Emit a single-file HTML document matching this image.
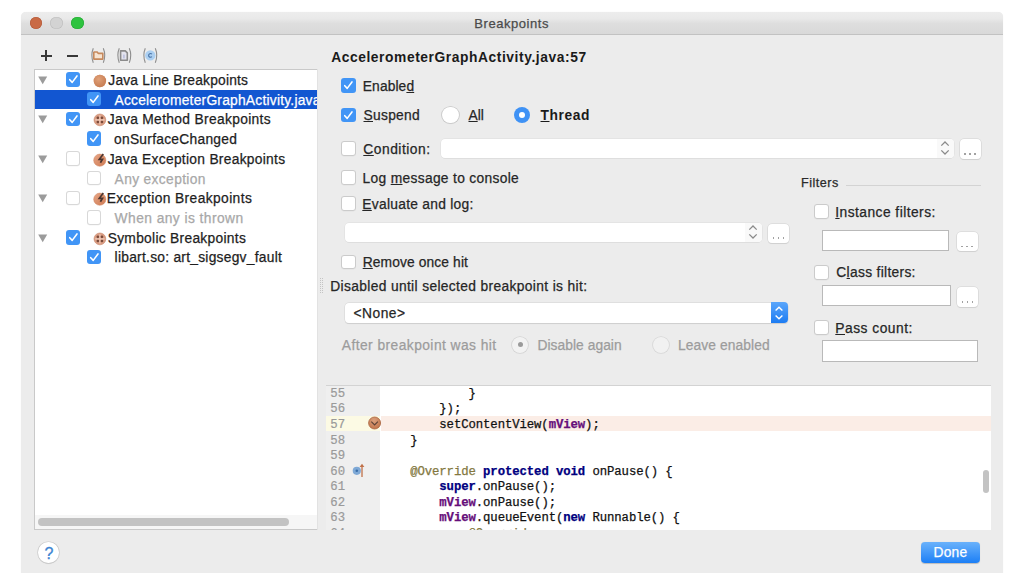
<!DOCTYPE html>
<html><head><meta charset="utf-8">
<style>
*{margin:0;padding:0;box-sizing:border-box}
html,body{width:1024px;height:573px;overflow:hidden;background:#fff;font-family:"Liberation Sans",sans-serif;color:#262626}
.a{position:absolute}
.t{position:absolute;white-space:nowrap}
.s{-webkit-text-stroke:0.25px currentColor}
u{text-decoration:underline;text-underline-offset:1px;text-decoration-thickness:1px}
#clipT{position:absolute;left:35px;top:70px;width:282px;height:445px;overflow:hidden}
#clipE{position:absolute;left:325.6px;top:386.6px;width:665.7px;height:143.1px;overflow:hidden}
</style></head><body>
<div class="a" style="left:21.3px;top:12px;width:982.00px;height:568.00px;background:#ececec;border-radius:5px 5px 6px 6px;box-shadow:0 0 1px rgba(0,0,0,0.08)"></div>
<div class="a" style="left:21.3px;top:12px;width:982.00px;height:23.00px;background:linear-gradient(#ededed 0%,#e9e9e9 30%,#dedede 52%,#d9d9d9 100%);border-bottom:1px solid #c2c2c2;border-radius:5px 5px 0 0"></div>
<div class="a" style="left:29.65px;top:16.95px;width:12.5px;height:12.5px;border-radius:50%;background:#c96a45;box-shadow:inset 0 0 0 0.6px #b35a3a"></div>
<div class="a" style="left:50.25px;top:16.95px;width:12.5px;height:12.5px;border-radius:50%;background:#d3d3d3;box-shadow:inset 0 0 0 0.6px #bdbdbd"></div>
<div class="a" style="left:71.25px;top:16.95px;width:12.5px;height:12.5px;border-radius:50%;background:#2ec33f;box-shadow:inset 0 0 0 0.6px #27a936"></div>
<div class="a" style="left:41px;top:54.6px;width:10.60px;height:2.00px;background:#383838"></div>
<div class="a" style="left:45.3px;top:50.3px;width:2.00px;height:10.50px;background:#383838"></div>
<div class="a" style="left:66.9px;top:54.6px;width:10.80px;height:2.00px;background:#383838"></div>
<svg class="a" style="left:88px;top:46px" width="74" height="20" viewBox="0 0 74 20">
 <g fill="none" stroke="#8e8e8e" stroke-width="1.1">
  <path d="M5.3 2.3 Q2.4 9.3 5.3 16.8"/><path d="M15.3 2.3 Q18.2 9.3 15.3 16.8"/>
  <path d="M31.3 2.3 Q28.4 9.3 31.3 16.8"/><path d="M41.3 2.3 Q44.2 9.3 41.3 16.8"/>
  <path d="M57.3 2.3 Q54.4 9.3 57.3 16.8"/><path d="M67.3 2.3 Q70.2 9.3 67.3 16.8"/>
 </g>
 <path d="M5.8 6.4 V13.1 H14.8 V7.4 H10.2 L9.2 6.0 H6.2 Z" fill="#f6e4d2" stroke="#c6895d" stroke-width="1.6" stroke-linejoin="round"/>
 <path d="M32.6 4.9 H37.3 L39.3 6.9 V14.2 H32.6 Z" fill="#e4e4ee" stroke="#8b8b8b" stroke-width="1.6" stroke-linejoin="round"/>
 <rect x="35.5" y="8.6" width="0.9" height="3.8" fill="#9ba3d2"/>
 <circle cx="62.3" cy="9.4" r="5.2" fill="#abcff1"/>
 <path d="M63.9 8.1 A1.9 1.9 0 1 0 63.9 10.7" fill="none" stroke="#4a75a8" stroke-width="1.1"/>
</svg>
<div class="a" style="left:34px;top:69px;width:284.00px;height:461.00px;background:#fff;border:1px solid #c9c9c9"></div>
<div class="a" style="left:35px;top:90.2px;width:282.00px;height:19.00px;background:#1256d1"></div>
<div class="a" style="left:35px;top:515px;width:282.00px;height:14.00px;background:#f6f6f6"></div>
<div class="a" style="left:38px;top:518px;width:251.00px;height:8.00px;background:#c3c3c3;border-radius:4px"></div>
<svg class="a" style="left:38px;top:75.50px" width="10" height="9" viewBox="0 0 10 9"><path d="M0.2 0.6 H9.2 L4.7 8.2 Z" fill="#9b9b9b"/></svg>
<div class="a" style="left:65.9px;top:72.2px;width:14.5px;height:14.5px;border-radius:3px;background:#4195f6"></div>
<svg class="a" style="left:65.9px;top:72.2px" width="14.5" height="14.5" viewBox="0 0 14 14"><path d="M3.6 7.4 L6 10 L10.6 3.8" fill="none" stroke="#fff" stroke-width="1.5" stroke-linecap="round" stroke-linejoin="round"/></svg>
<svg class="a" style="left:92.5px;top:73.50px" width="14" height="14" viewBox="0 0 14 14"><circle cx="6.9" cy="7" r="6.2" fill="#d08a5e"/><circle cx="6.9" cy="7" r="6.2" fill="url(#gl)"/></svg>
<div class="a" style="left:86.7px;top:91.95px;width:14.5px;height:14.5px;border-radius:3px;background:#4195f6"></div>
<svg class="a" style="left:86.7px;top:91.95px" width="14.5" height="14.5" viewBox="0 0 14 14"><path d="M3.6 7.4 L6 10 L10.6 3.8" fill="none" stroke="#fff" stroke-width="1.5" stroke-linecap="round" stroke-linejoin="round"/></svg>
<svg class="a" style="left:38px;top:115.00px" width="10" height="9" viewBox="0 0 10 9"><path d="M0.2 0.6 H9.2 L4.7 8.2 Z" fill="#9b9b9b"/></svg>
<div class="a" style="left:65.9px;top:111.7px;width:14.5px;height:14.5px;border-radius:3px;background:#4195f6"></div>
<svg class="a" style="left:65.9px;top:111.7px" width="14.5" height="14.5" viewBox="0 0 14 14"><path d="M3.6 7.4 L6 10 L10.6 3.8" fill="none" stroke="#fff" stroke-width="1.5" stroke-linecap="round" stroke-linejoin="round"/></svg>
<svg class="a" style="left:92.5px;top:113.00px" width="14" height="14" viewBox="0 0 14 14"><circle cx="6.9" cy="6.9" r="5.9" fill="#d99c82" stroke="#c9866a" stroke-width="0.6"/><path d="M6.9 2.2 V11.6 M2.2 6.9 H11.6" stroke="#f0cdbd" stroke-width="1.1"/><g fill="#7a4a3a"><circle cx="4.85" cy="4.85" r="1.3"/><circle cx="8.95" cy="4.85" r="1.3"/><circle cx="4.85" cy="8.95" r="1.3"/><circle cx="8.95" cy="8.95" r="1.3"/></g></svg>
<div class="a" style="left:86.7px;top:131.45px;width:14.5px;height:14.5px;border-radius:3px;background:#4195f6"></div>
<svg class="a" style="left:86.7px;top:131.45px" width="14.5" height="14.5" viewBox="0 0 14 14"><path d="M3.6 7.4 L6 10 L10.6 3.8" fill="none" stroke="#fff" stroke-width="1.5" stroke-linecap="round" stroke-linejoin="round"/></svg>
<svg class="a" style="left:38px;top:154.50px" width="10" height="9" viewBox="0 0 10 9"><path d="M0.2 0.6 H9.2 L4.7 8.2 Z" fill="#9b9b9b"/></svg>
<div class="a" style="left:65.9px;top:151.2px;width:14.5px;height:14.5px;border-radius:3px;background:#fff;box-shadow:inset 0 0 0 1px #d8d8d8, 0 0.5px 0 rgba(0,0,0,0.05)"></div>
<svg class="a" style="left:92.5px;top:152.50px" width="14" height="14" viewBox="0 0 14 14"><circle cx="6.8" cy="7.2" r="6.1" fill="url(#ge)" stroke="#cf8462" stroke-width="0.5"/><path d="M10.3 1.0 L6.3 6.3 H9.5 L7.4 9.8" fill="none" stroke="#4a3631" stroke-width="1.7" stroke-linejoin="miter"/></svg>
<div class="a" style="left:86.7px;top:170.95px;width:14.5px;height:14.5px;border-radius:3px;background:#fff;box-shadow:inset 0 0 0 1px #d8d8d8, 0 0.5px 0 rgba(0,0,0,0.05)"></div>
<svg class="a" style="left:38px;top:194.00px" width="10" height="9" viewBox="0 0 10 9"><path d="M0.2 0.6 H9.2 L4.7 8.2 Z" fill="#9b9b9b"/></svg>
<div class="a" style="left:65.9px;top:190.7px;width:14.5px;height:14.5px;border-radius:3px;background:#fff;box-shadow:inset 0 0 0 1px #d8d8d8, 0 0.5px 0 rgba(0,0,0,0.05)"></div>
<svg class="a" style="left:92.5px;top:192.00px" width="14" height="14" viewBox="0 0 14 14"><circle cx="6.8" cy="7.2" r="6.1" fill="url(#ge)" stroke="#cf8462" stroke-width="0.5"/><path d="M10.3 1.0 L6.3 6.3 H9.5 L7.4 9.8" fill="none" stroke="#4a3631" stroke-width="1.7" stroke-linejoin="miter"/></svg>
<div class="a" style="left:86.7px;top:210.45px;width:14.5px;height:14.5px;border-radius:3px;background:#fff;box-shadow:inset 0 0 0 1px #d8d8d8, 0 0.5px 0 rgba(0,0,0,0.05)"></div>
<svg class="a" style="left:38px;top:233.50px" width="10" height="9" viewBox="0 0 10 9"><path d="M0.2 0.6 H9.2 L4.7 8.2 Z" fill="#9b9b9b"/></svg>
<div class="a" style="left:65.9px;top:230.2px;width:14.5px;height:14.5px;border-radius:3px;background:#4195f6"></div>
<svg class="a" style="left:65.9px;top:230.2px" width="14.5" height="14.5" viewBox="0 0 14 14"><path d="M3.6 7.4 L6 10 L10.6 3.8" fill="none" stroke="#fff" stroke-width="1.5" stroke-linecap="round" stroke-linejoin="round"/></svg>
<svg class="a" style="left:92.5px;top:231.50px" width="14" height="14" viewBox="0 0 14 14"><circle cx="6.9" cy="6.9" r="5.9" fill="#d99c82" stroke="#c9866a" stroke-width="0.6"/><path d="M6.9 2.2 V11.6 M2.2 6.9 H11.6" stroke="#f0cdbd" stroke-width="1.1"/><g fill="#7a4a3a"><circle cx="4.85" cy="4.85" r="1.3"/><circle cx="8.95" cy="4.85" r="1.3"/><circle cx="4.85" cy="8.95" r="1.3"/><circle cx="8.95" cy="8.95" r="1.3"/></g></svg>
<div class="a" style="left:86.7px;top:249.95px;width:14.5px;height:14.5px;border-radius:3px;background:#4195f6"></div>
<svg class="a" style="left:86.7px;top:249.95px" width="14.5" height="14.5" viewBox="0 0 14 14"><path d="M3.6 7.4 L6 10 L10.6 3.8" fill="none" stroke="#fff" stroke-width="1.5" stroke-linecap="round" stroke-linejoin="round"/></svg>
<svg width="0" height="0" style="position:absolute"><defs><radialGradient id="gl" cx="0.4" cy="0.35" r="0.7"><stop offset="0" stop-color="#e9ad86" stop-opacity="0.7"/><stop offset="1" stop-color="#c0734a" stop-opacity="0.6"/></radialGradient><linearGradient id="ge" x1="0" y1="0" x2="1" y2="1"><stop offset="0" stop-color="#e7a686"/><stop offset="1" stop-color="#cf7a52"/></linearGradient></defs></svg>
<div class="a" style="left:317.2px;top:69px;width:1.00px;height:461.00px;background:#e2e2e2"></div>
<svg class="a" style="left:319px;top:277px" width="6" height="17" viewBox="0 0 6 17"><g fill="#c4c4c4"><rect x="1" y="1" width="1" height="1"/><rect x="3" y="1" width="1" height="1"/><rect x="1" y="3" width="1" height="1"/><rect x="3" y="3" width="1" height="1"/><rect x="1" y="5" width="1" height="1"/><rect x="3" y="5" width="1" height="1"/><rect x="1" y="7" width="1" height="1"/><rect x="3" y="7" width="1" height="1"/><rect x="1" y="9" width="1" height="1"/><rect x="3" y="9" width="1" height="1"/><rect x="1" y="11" width="1" height="1"/><rect x="3" y="11" width="1" height="1"/><rect x="1" y="13" width="1" height="1"/><rect x="3" y="13" width="1" height="1"/><rect x="1" y="15" width="1" height="1"/><rect x="3" y="15" width="1" height="1"/></g></svg>
<div class="a" style="left:341.2px;top:78.2px;width:14.5px;height:14.5px;border-radius:3px;background:#4195f6"></div>
<svg class="a" style="left:341.2px;top:78.2px" width="14.5" height="14.5" viewBox="0 0 14 14"><path d="M3.6 7.4 L6 10 L10.6 3.8" fill="none" stroke="#fff" stroke-width="1.5" stroke-linecap="round" stroke-linejoin="round"/></svg>
<div class="a" style="left:341.2px;top:107.7px;width:14.5px;height:14.5px;border-radius:3px;background:#4195f6"></div>
<svg class="a" style="left:341.2px;top:107.7px" width="14.5" height="14.5" viewBox="0 0 14 14"><path d="M3.6 7.4 L6 10 L10.6 3.8" fill="none" stroke="#fff" stroke-width="1.5" stroke-linecap="round" stroke-linejoin="round"/></svg>
<div class="a" style="left:341.2px;top:141.2px;width:14.5px;height:14.5px;border-radius:3px;background:#fff;box-shadow:inset 0 0 0 1px #cbcbcb, 0 0.5px 0 rgba(0,0,0,0.05)"></div>
<div class="a" style="left:341.2px;top:170.2px;width:14.5px;height:14.5px;border-radius:3px;background:#fff;box-shadow:inset 0 0 0 1px #cbcbcb, 0 0.5px 0 rgba(0,0,0,0.05)"></div>
<div class="a" style="left:341.2px;top:196.2px;width:14.5px;height:14.5px;border-radius:3px;background:#fff;box-shadow:inset 0 0 0 1px #cbcbcb, 0 0.5px 0 rgba(0,0,0,0.05)"></div>
<div class="a" style="left:341.2px;top:254.5px;width:14.5px;height:14.5px;border-radius:3px;background:#fff;box-shadow:inset 0 0 0 1px #cbcbcb, 0 0.5px 0 rgba(0,0,0,0.05)"></div>
<div class="a" style="left:442.4px;top:106.8px;width:16.2px;height:16.2px;border-radius:50%;background:#fff;box-shadow:0 0 0 0.8px #c6c6c6,0 0.6px 1px rgba(0,0,0,0.12)"></div>
<div class="a" style="left:514px;top:106.8px;width:16.2px;height:16.2px;border-radius:50%;background:#3f92f5"></div>
<div class="a" style="left:519.10px;top:111.90px;width:6px;height:6px;border-radius:50%;background:#fff"></div>
<div class="a" style="left:512.3px;top:336.5px;width:16.1px;height:16.1px;border-radius:50%;background:#f2f2f2;box-shadow:0 0 0 0.8px #d2d2d2"></div>
<div class="a" style="left:517.85px;top:342.05px;width:5px;height:5px;border-radius:50%;background:#9a9a9a"></div>
<div class="a" style="left:652.9px;top:336.5px;width:16.1px;height:16.1px;border-radius:50%;background:#f1f1f1;box-shadow:0 0 0 0.8px #d6d6d6"></div>
<div class="a" style="left:441.1px;top:138.7px;width:512.50px;height:19.30px;background:#fff;border-radius:4px;box-shadow:0 0 0 0.5px #dcdcdc,0 0.6px 0.6px rgba(0,0,0,0.10)"></div>
<div class="a" style="left:937.10px;top:138.7px;width:16.5px;height:19.30px;background:#f9f9f9;border-radius:0 4px 4px 0"></div>
<svg class="a" style="left:940.30px;top:141.35px" width="10" height="14" viewBox="0 0 10 14"><path d="M1.3 4.6 L5 1 L8.7 4.6 M1.3 9.4 L5 13 L8.7 9.4" fill="none" stroke="#8a8a8a" stroke-width="1.3"/></svg>
<div class="a" style="left:959.6px;top:138.9px;width:21.20px;height:20.10px;background:#fff;border-radius:4px;box-shadow:0 0 0 0.6px #d2d2d2,0 0.7px 0.7px rgba(0,0,0,0.12)"></div>
<div class="a" style="left:964.40px;top:153.00px;width:1.6px;height:1.6px;background:#a2a2a2"></div>
<div class="a" style="left:969.40px;top:153.00px;width:1.6px;height:1.6px;background:#a2a2a2"></div>
<div class="a" style="left:974.40px;top:153.00px;width:1.6px;height:1.6px;background:#a2a2a2"></div>
<div class="a" style="left:344.8px;top:222.9px;width:416.80px;height:19.10px;background:#fff;border-radius:4px;box-shadow:0 0 0 0.5px #dcdcdc,0 0.6px 0.6px rgba(0,0,0,0.10)"></div>
<div class="a" style="left:745.10px;top:222.9px;width:16.5px;height:19.10px;background:#f9f9f9;border-radius:0 4px 4px 0"></div>
<svg class="a" style="left:748.30px;top:225.45px" width="10" height="14" viewBox="0 0 10 14"><path d="M1.3 4.6 L5 1 L8.7 4.6 M1.3 9.4 L5 13 L8.7 9.4" fill="none" stroke="#8a8a8a" stroke-width="1.3"/></svg>
<div class="a" style="left:768.3px;top:223.5px;width:20.60px;height:19.50px;background:#fff;border-radius:4px;box-shadow:0 0 0 0.6px #d2d2d2,0 0.7px 0.7px rgba(0,0,0,0.12)"></div>
<div class="a" style="left:772.80px;top:237.00px;width:1.6px;height:1.6px;background:#a2a2a2"></div>
<div class="a" style="left:777.80px;top:237.00px;width:1.6px;height:1.6px;background:#a2a2a2"></div>
<div class="a" style="left:782.80px;top:237.00px;width:1.6px;height:1.6px;background:#a2a2a2"></div>
<div class="a" style="left:344.9px;top:302.5px;width:443.1px;height:20.8px;background:#fff;border-radius:4px;box-shadow:0 0 0 0.5px #d4d4d4,0 0.7px 0.7px rgba(0,0,0,0.14)"></div>
<div class="a" style="left:770.6px;top:302.3px;width:17.4px;height:21px;background:linear-gradient(#5aa6fb,#1d7cf2);border-radius:0 4px 4px 0"></div>
<svg class="a" style="left:774.3px;top:305.8px" width="10" height="14" viewBox="0 0 10 14"><path d="M1.6 4.6 L5 1.3 L8.4 4.6 M1.6 9.4 L5 12.7 L8.4 9.4" fill="none" stroke="#fff" stroke-width="1.4"/></svg>
<div class="a" style="left:845.7px;top:184.6px;width:135.30px;height:1.00px;background:#d3d3d3"></div>
<div class="a" style="left:814.2px;top:204.3px;width:14.5px;height:14.5px;border-radius:3px;background:#fff;box-shadow:inset 0 0 0 1px #cbcbcb, 0 0.5px 0 rgba(0,0,0,0.05)"></div>
<div class="a" style="left:814.2px;top:265.0px;width:14.5px;height:14.5px;border-radius:3px;background:#fff;box-shadow:inset 0 0 0 1px #cbcbcb, 0 0.5px 0 rgba(0,0,0,0.05)"></div>
<div class="a" style="left:814.2px;top:320.0px;width:14.5px;height:14.5px;border-radius:3px;background:#fff;box-shadow:inset 0 0 0 1px #cbcbcb, 0 0.5px 0 rgba(0,0,0,0.05)"></div>
<div class="a" style="left:822.2px;top:230.4px;width:126.60px;height:21.10px;background:#fff;border:1px solid #b9b9b9"></div>
<div class="a" style="left:822px;top:285.4px;width:128.80px;height:20.90px;background:#fff;border:1px solid #b9b9b9"></div>
<div class="a" style="left:822px;top:340.4px;width:156.00px;height:21.40px;background:#fff;border:1px solid #b9b9b9"></div>
<div class="a" style="left:957px;top:231.8px;width:20.50px;height:19.70px;background:#fff;border-radius:4px;box-shadow:0 0 0 0.6px #d2d2d2,0 0.7px 0.7px rgba(0,0,0,0.12)"></div>
<div class="a" style="left:961.45px;top:245.50px;width:1.6px;height:1.6px;background:#a2a2a2"></div>
<div class="a" style="left:966.45px;top:245.50px;width:1.6px;height:1.6px;background:#a2a2a2"></div>
<div class="a" style="left:971.45px;top:245.50px;width:1.6px;height:1.6px;background:#a2a2a2"></div>
<div class="a" style="left:956.9px;top:286.8px;width:21.00px;height:20.20px;background:#fff;border-radius:4px;box-shadow:0 0 0 0.6px #d2d2d2,0 0.7px 0.7px rgba(0,0,0,0.12)"></div>
<div class="a" style="left:961.60px;top:301.00px;width:1.6px;height:1.6px;background:#a2a2a2"></div>
<div class="a" style="left:966.60px;top:301.00px;width:1.6px;height:1.6px;background:#a2a2a2"></div>
<div class="a" style="left:971.60px;top:301.00px;width:1.6px;height:1.6px;background:#a2a2a2"></div>
<div class="a" style="left:325.6px;top:385.4px;width:665.70px;height:144.30px;background:#fff;border-top:1px solid #d3d3d3"></div>
<div class="a" style="left:325.6px;top:386.4px;width:54.90px;height:143.30px;background:#efefef"></div>
<div class="a" style="left:325.6px;top:415.5px;width:54.90px;height:15.90px;background:#fcfae4"></div>
<div class="a" style="left:380.5px;top:415.5px;width:610.80px;height:15.90px;background:#fbede6"></div>
<svg class="a" style="left:367px;top:416px" width="15" height="15" viewBox="0 0 15 15"><defs><radialGradient id="gb" cx="0.45" cy="0.3" r="0.75"><stop offset="0" stop-color="#dba07c"/><stop offset="1" stop-color="#c07248"/></radialGradient></defs><circle cx="7.6" cy="7" r="6" fill="url(#gb)" stroke="#a9653f" stroke-width="0.8"/><path d="M4.3 5.6 L7.6 8.9 L10.9 5.6" fill="none" stroke="#5e4236" stroke-width="1.15"/></svg>
<svg class="a" style="left:351px;top:462px" width="14" height="16" viewBox="0 0 14 16"><circle cx="5.8" cy="8.8" r="4.1" fill="#7fa9d6"/><circle cx="5.8" cy="8.8" r="1.3" fill="#3a6ea8"/><path d="M11 15 V3" stroke="#c0714a" stroke-width="1.3"/><path d="M8.6 5 L11 1.8 L13.4 5 Z" fill="#c0714a"/></svg>
<div class="a" style="left:983px;top:470px;width:6.20px;height:22.50px;background:#c3c3c3;border-radius:3px"></div>
<div class="a" style="left:920.7px;top:541.5px;width:59.8px;height:21.1px;border-radius:4px;background:linear-gradient(#6ab2fb,#1c7ff6);box-shadow:0 0.5px 0.8px rgba(0,0,0,0.2)"></div>
<div class="a" style="left:38.3px;top:542.4px;width:20.4px;height:20.4px;border-radius:50%;background:#fff;box-shadow:0 0 0 0.6px #c8c8c8,0 0.7px 0.8px rgba(0,0,0,0.18)"></div>
<div class="t" style="left:44.4px;top:545.6px;font:normal 16px/16px 'Liberation Sans';color:#3d84d2;-webkit-text-stroke:0.3px #3d84d2">?</div>
<div id="clipT"><div class="a" style="left:-35px;top:-70px;width:1024px;height:573px">
<div class="t s" style="left:108.30px;top:73.70px;font:normal 13.8px/13.8px 'Liberation Sans';letter-spacing:0.197px;color:#1e1e1e;">Java Line Breakpoints</div>
<div class="t s" style="left:114.50px;top:93.70px;font:normal 13.8px/13.8px 'Liberation Sans';letter-spacing:0.226px;color:#ffffff;">AccelerometerGraphActivity.java</div>
<div class="t s" style="left:107.70px;top:112.70px;font:normal 13.8px/13.8px 'Liberation Sans';letter-spacing:0.328px;color:#1e1e1e;">Java Method Breakpoints</div>
<div class="t s" style="left:114.00px;top:132.70px;font:normal 13.8px/13.8px 'Liberation Sans';letter-spacing:0.265px;color:#1e1e1e;">onSurfaceChanged</div>
<div class="t s" style="left:107.70px;top:152.70px;font:normal 13.8px/13.8px 'Liberation Sans';letter-spacing:0.286px;color:#1e1e1e;">Java Exception Breakpoints</div>
<div class="t s" style="left:114.60px;top:172.70px;font:normal 13.8px/13.8px 'Liberation Sans';letter-spacing:0.350px;color:#a8a8a8;">Any exception</div>
<div class="t s" style="left:106.70px;top:191.70px;font:normal 13.8px/13.8px 'Liberation Sans';letter-spacing:0.391px;color:#1e1e1e;">Exception Breakpoints</div>
<div class="t s" style="left:114.60px;top:211.70px;font:normal 13.8px/13.8px 'Liberation Sans';letter-spacing:0.436px;color:#a8a8a8;">When any is thrown</div>
<div class="t s" style="left:107.70px;top:231.70px;font:normal 13.8px/13.8px 'Liberation Sans';letter-spacing:0.286px;color:#1e1e1e;">Symbolic Breakpoints</div>
<div class="t s" style="left:114.60px;top:250.70px;font:normal 13.8px/13.8px 'Liberation Sans';letter-spacing:0.257px;color:#1e1e1e;">libart.so: art_sigsegv_fault</div>
</div></div>
<div class="t s" style="left:474.30px;top:17.10px;font:normal 13px/13px 'Liberation Sans';letter-spacing:0.545px;color:#4b4b4b;">Breakpoints</div>
<div class="t" style="left:331.20px;top:50.70px;font:bold 13.8px/13.8px 'Liberation Sans';letter-spacing:0.574px;color:#1a1a1a;">AccelerometerGraphActivity.java:57</div>
<div class="t s" style="left:362.80px;top:79.70px;font:normal 13.8px/13.8px 'Liberation Sans';letter-spacing:0.107px;color:#262626;">Enable<u>d</u></div>
<div class="t s" style="left:363.50px;top:108.70px;font:normal 13.8px/13.8px 'Liberation Sans';letter-spacing:0.284px;color:#262626;"><u>S</u>uspend</div>
<div class="t s" style="left:468.50px;top:108.70px;font:normal 13.8px/13.8px 'Liberation Sans';letter-spacing:-0.034px;color:#262626;"><u>A</u>ll</div>
<div class="t" style="left:540.50px;top:108.70px;font:bold 13.8px/13.8px 'Liberation Sans';letter-spacing:0.566px;color:#1a1a1a;"><u>T</u>hread</div>
<div class="t s" style="left:363.30px;top:142.70px;font:normal 13.8px/13.8px 'Liberation Sans';letter-spacing:0.512px;color:#262626;"><u>C</u>ondition:</div>
<div class="t s" style="left:362.60px;top:171.70px;font:normal 13.8px/13.8px 'Liberation Sans';letter-spacing:0.310px;color:#262626;">Log <u>m</u>essage to console</div>
<div class="t s" style="left:362.30px;top:197.70px;font:normal 13.8px/13.8px 'Liberation Sans';letter-spacing:0.276px;color:#262626;"><u>E</u>valuate and log:</div>
<div class="t s" style="left:362.70px;top:255.70px;font:normal 13.8px/13.8px 'Liberation Sans';letter-spacing:0.122px;color:#262626;"><u>R</u>emove once hit</div>
<div class="t s" style="left:330.20px;top:279.70px;font:normal 13.8px/13.8px 'Liberation Sans';letter-spacing:0.353px;color:#262626;">Disabled until selected breakpoint is hit:</div>
<div class="t s" style="left:353.50px;top:306.70px;font:normal 13.8px/13.8px 'Liberation Sans';letter-spacing:0.492px;color:#262626;">&lt;None&gt;</div>
<div class="t s" style="left:341.80px;top:338.70px;font:normal 13.8px/13.8px 'Liberation Sans';letter-spacing:0.442px;color:#9c9c9c;">After breakpoint was hit</div>
<div class="t s" style="left:537.40px;top:338.70px;font:normal 13.8px/13.8px 'Liberation Sans';letter-spacing:0.056px;color:#9c9c9c;">Disable again</div>
<div class="t s" style="left:678.00px;top:338.70px;font:normal 13.8px/13.8px 'Liberation Sans';letter-spacing:0.087px;color:#9c9c9c;">Leave enabled</div>
<div class="t s" style="left:801.10px;top:176.80px;font:normal 12.6px/12.6px 'Liberation Sans';letter-spacing:0.469px;color:#2a2a2a;">Filters</div>
<div class="t s" style="left:835.30px;top:205.70px;font:normal 13.8px/13.8px 'Liberation Sans';letter-spacing:0.453px;color:#262626;"><u>I</u>nstance filters:</div>
<div class="t s" style="left:836.30px;top:265.70px;font:normal 13.8px/13.8px 'Liberation Sans';letter-spacing:0.308px;color:#262626;">C<u>l</u>ass filters:</div>
<div class="t s" style="left:835.30px;top:321.70px;font:normal 13.8px/13.8px 'Liberation Sans';letter-spacing:0.494px;color:#262626;"><u>P</u>ass count:</div>
<div class="t s" style="left:933.50px;top:545.70px;font:normal 13.8px/13.8px 'Liberation Sans';letter-spacing:0.230px;color:#ffffff;">Done</div>
<div id="clipE"><div class="a" style="left:-325.6px;top:-386.6px;width:1024px;height:573px">
<div class="t" style="left:330.3px;top:387.95px;font:12.3px/12.3px 'Liberation Mono';color:#9a9a9a;-webkit-text-stroke:0.2px #9a9a9a">55</div>
<div class="t" style="left:381.0px;top:387.95px;font:12.3px/12.3px 'Liberation Mono';letter-spacing:-0.09px;white-space:pre;-webkit-text-stroke:0.25px currentColor"><span style="color:#111;-webkit-text-stroke:0.25px currentColor">            }</span></div>
<div class="t" style="left:330.3px;top:402.95px;font:12.3px/12.3px 'Liberation Mono';color:#9a9a9a;-webkit-text-stroke:0.2px #9a9a9a">56</div>
<div class="t" style="left:381.0px;top:402.95px;font:12.3px/12.3px 'Liberation Mono';letter-spacing:-0.09px;white-space:pre;-webkit-text-stroke:0.25px currentColor"><span style="color:#111;-webkit-text-stroke:0.25px currentColor">        });</span></div>
<div class="t" style="left:330.3px;top:418.95px;font:12.3px/12.3px 'Liberation Mono';color:#9a9a9a;-webkit-text-stroke:0.2px #9a9a9a">57</div>
<div class="t" style="left:381.0px;top:418.95px;font:12.3px/12.3px 'Liberation Mono';letter-spacing:-0.09px;white-space:pre;-webkit-text-stroke:0.25px currentColor"><span style="color:#111;-webkit-text-stroke:0.25px currentColor">        setContentView(</span><span style="color:#660e7a;font-weight:bold;-webkit-text-stroke:0.25px currentColor">mView</span><span style="color:#111;-webkit-text-stroke:0.25px currentColor">);</span></div>
<div class="t" style="left:330.3px;top:434.95px;font:12.3px/12.3px 'Liberation Mono';color:#9a9a9a;-webkit-text-stroke:0.2px #9a9a9a">58</div>
<div class="t" style="left:381.0px;top:434.95px;font:12.3px/12.3px 'Liberation Mono';letter-spacing:-0.09px;white-space:pre;-webkit-text-stroke:0.25px currentColor"><span style="color:#111;-webkit-text-stroke:0.25px currentColor">    }</span></div>
<div class="t" style="left:330.3px;top:449.95px;font:12.3px/12.3px 'Liberation Mono';color:#9a9a9a;-webkit-text-stroke:0.2px #9a9a9a">59</div>
<div class="t" style="left:330.3px;top:465.95px;font:12.3px/12.3px 'Liberation Mono';color:#9a9a9a;-webkit-text-stroke:0.2px #9a9a9a">60</div>
<div class="t" style="left:381.0px;top:465.95px;font:12.3px/12.3px 'Liberation Mono';letter-spacing:-0.09px;white-space:pre;-webkit-text-stroke:0.25px currentColor"><span style="color:#111;-webkit-text-stroke:0.25px currentColor">    </span><span style="color:#83783f;-webkit-text-stroke:0.25px currentColor">@Override</span><span style="color:#111;-webkit-text-stroke:0.25px currentColor"> </span><span style="color:#000080;font-weight:bold;-webkit-text-stroke:0.25px currentColor">protected</span><span style="color:#111;-webkit-text-stroke:0.25px currentColor"> </span><span style="color:#000080;font-weight:bold;-webkit-text-stroke:0.25px currentColor">void</span><span style="color:#111;-webkit-text-stroke:0.25px currentColor"> onPause() {</span></div>
<div class="t" style="left:330.3px;top:480.95px;font:12.3px/12.3px 'Liberation Mono';color:#9a9a9a;-webkit-text-stroke:0.2px #9a9a9a">61</div>
<div class="t" style="left:381.0px;top:480.95px;font:12.3px/12.3px 'Liberation Mono';letter-spacing:-0.09px;white-space:pre;-webkit-text-stroke:0.25px currentColor"><span style="color:#111;-webkit-text-stroke:0.25px currentColor">        </span><span style="color:#000080;font-weight:bold;-webkit-text-stroke:0.25px currentColor">super</span><span style="color:#111;-webkit-text-stroke:0.25px currentColor">.onPause();</span></div>
<div class="t" style="left:330.3px;top:496.95px;font:12.3px/12.3px 'Liberation Mono';color:#9a9a9a;-webkit-text-stroke:0.2px #9a9a9a">62</div>
<div class="t" style="left:381.0px;top:496.95px;font:12.3px/12.3px 'Liberation Mono';letter-spacing:-0.09px;white-space:pre;-webkit-text-stroke:0.25px currentColor"><span style="color:#111;-webkit-text-stroke:0.25px currentColor">        </span><span style="color:#660e7a;font-weight:bold;-webkit-text-stroke:0.25px currentColor">mView</span><span style="color:#111;-webkit-text-stroke:0.25px currentColor">.onPause();</span></div>
<div class="t" style="left:330.3px;top:511.95px;font:12.3px/12.3px 'Liberation Mono';color:#9a9a9a;-webkit-text-stroke:0.2px #9a9a9a">63</div>
<div class="t" style="left:381.0px;top:511.95px;font:12.3px/12.3px 'Liberation Mono';letter-spacing:-0.09px;white-space:pre;-webkit-text-stroke:0.25px currentColor"><span style="color:#111;-webkit-text-stroke:0.25px currentColor">        </span><span style="color:#660e7a;font-weight:bold;-webkit-text-stroke:0.25px currentColor">mView</span><span style="color:#111;-webkit-text-stroke:0.25px currentColor">.queueEvent(</span><span style="color:#000080;font-weight:bold;-webkit-text-stroke:0.25px currentColor">new</span><span style="color:#111;-webkit-text-stroke:0.25px currentColor"> Runnable() {</span></div>
<div class="t" style="left:330.3px;top:527.95px;font:12.3px/12.3px 'Liberation Mono';color:#9a9a9a;-webkit-text-stroke:0.2px #9a9a9a">64</div>
<div class="t" style="left:381.0px;top:527.95px;font:12.3px/12.3px 'Liberation Mono';letter-spacing:-0.09px;white-space:pre;-webkit-text-stroke:0.25px currentColor"><span style="color:#111;-webkit-text-stroke:0.25px currentColor">            </span><span style="color:#83783f;-webkit-text-stroke:0.25px currentColor">@Override</span></div>

</div></div>
</body></html>
